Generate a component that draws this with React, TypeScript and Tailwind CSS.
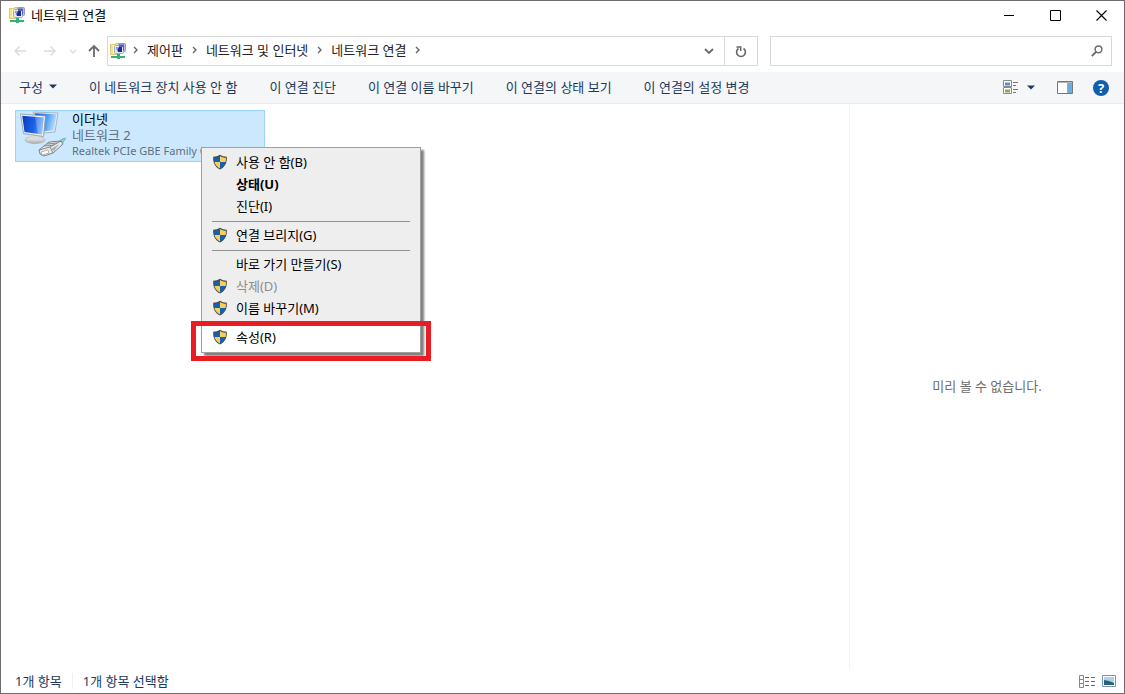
import clsx from "clsx";

const commands = [
  "이 네트워크 장치 사용 안 함",
  "이 연결 진단",
  "이 연결 이름 바꾸기",
  "이 연결의 상태 보기",
  "이 연결의 설정 변경",
];

const menuGroups = [
  [
    { label: "사용 안 함(B)", shield: true },
    { label: "상태(U)", bold: true },
    { label: "진단(I)" },
  ],
  [{ label: "연결 브리지(G)", shield: true }],
  [
    { label: "바로 가기 만들기(S)" },
    { label: "삭제(D)", shield: true, disabled: true },
    { label: "이름 바꾸기(M)", shield: true },
  ],
];

function NetworkFolderIcon() {
  return (
    <svg width="16" height="16" viewBox="0 0 16 16" className="shrink-0">
      <path d="M0.5 1.5h5v-1h4v11h-9z" fill="#f5e47c" stroke="#dccb74" />
      <path d="M3 2h2v9H3z" fill="#fff8c4" />
      <rect x="8.5" y="0.5" width="7" height="8" rx="1" fill="#b9bfdc" stroke="#8f97bd" />
      <rect x="4.500" y="2.500" width="9" height="8" rx="1" fill="#e4e7f4" stroke="#a3a9c9" />
      <path d="M9 1.500h5v6h-1V4H9z" fill="#5562b8" />
      <path d="M6 4h6v5H8z" fill="#1c2b9c" />
      <path d="M6 4h3l-2 4z" fill="#8fa4ee" />
      <path d="M7 11h3v2h5v2h-5v1H7v-1H1v-2h6z" fill="#35b078" />
    </svg>
  );
}

function ShieldIcon() {
  return (
    <svg width="16" height="16" viewBox="0 0 16 16" className="shrink-0">
      <path
        d="M8 0.7C6.2 2 3.6 2.7 1.2 2.7 0.8 8.2 2.6 12.8 8 15.4 13.4 12.8 15.2 8.2 14.8 2.7 12.4 2.7 9.8 2 8 0.7z"
        fill="#4a4a45"
      />
      <path d="M8 2C6.300 3.1 4.3 3.7 2.1 3.8 2 5.3 2.1 6.6 2.4 8H8z" fill="#1362b0" />
      <path d="M8 2C9.700 3.1 11.7 3.7 13.9 3.8 14 5.3 13.9 6.6 13.6 8H8z" fill="#f8cf5c" />
      <path d="M2.4 8H8V14.4C5.1 12.9 3.2 10.8 2.4 8z" fill="#f8cf5c" />
      <path d="M13.6 8H8V14.4C10.9 12.9 12.8 10.8 13.6 8z" fill="#1362b0" />
    </svg>
  );
}

function EthernetIcon() {
  return (
    <svg width="48" height="48" viewBox="0 0 48 48" className="shrink-0">
      <defs>
        <linearGradient id="screen" x1="0" y1="0.2" x2="1" y2="0.4">
          <stop offset="0" stopColor="#0a3cc4" />
          <stop offset="0.6" stopColor="#1e62e6" />
          <stop offset="1" stopColor="#6fb0fa" />
        </linearGradient>
        <linearGradient id="back" x1="0" y1="0" x2="1" y2="0.2">
          <stop offset="0" stopColor="#1247cf" />
          <stop offset="0.6" stopColor="#4f9bf3" />
          <stop offset="1" stopColor="#b5dcfd" />
        </linearGradient>
        <linearGradient id="base" x1="0" y1="0" x2="0" y2="1">
          <stop offset="0" stopColor="#f7f7f7" />
          <stop offset="1" stopColor="#a9aeb3" />
        </linearGradient>
      </defs>
      <path d="M13 1l25 1-3 19-12 1z" fill="#e9edf1" stroke="#9aa6b1" strokeWidth="0.8" />
      <path d="M14.500 2.300l22 1-2.500 16-10 1z" fill="url(#back)" />
      <ellipse cx="15" cy="29" rx="10" ry="3.500" fill="url(#base)" stroke="#a3a8ac" strokeWidth="0.6" />
      <path d="M11 22l8 1 1 5q-5 3-9 0z" fill="#d9dcdf" />
      <path d="M0.5 3l25 2-2 20.500-20-3z" fill="#f2f4f6" stroke="#8b959f" strokeWidth="0.8" />
      <path d="M2.2 4.800l21.600 1.700-1.800 17-17.500-2.600z" fill="url(#screen)" />
      <path d="M15 5.800l8.800 0.700-1.800 17-4-0.600z" fill="#fff" opacity="0.25" />
      <path d="M37 32l5-4 4-1-4 6z" fill="#8acdd3" stroke="#5ea6ad" strokeWidth="0.6" />
      <path d="M19 39l10-8 12-1 2 3-10 9-9 3-4-2z" fill="#e5e9ea" stroke="#70777c" strokeWidth="0.9" />
      <path d="M19 39l11-3 3 6M30 36l11-6M27 33l10-1M24 35l10-1" fill="none" stroke="#788085" strokeWidth="0.9" />
      <path d="M21 41l7-2 1 3-7 2z" fill="#fff" stroke="#868c90" strokeWidth="0.6" />
      <path d="M31 38l8-5-5 7z" fill="#a9b1b5" />
    </svg>
  );
}

function Crumb({ children }: { children?: string }) {
  return (
    <>
      {children && <button className="whitespace-nowrap">{children}</button>}
      <svg width="5" height="8" viewBox="0 0 5 8" className="shrink-0">
        <path d="M1 1l3 3-3 3" fill="none" stroke="#666" strokeWidth="1.4" />
      </svg>
    </>
  );
}

function TitleBar() {
  return (
    <header className="flex h-7 shrink-0 items-center pl-2">
      <NetworkFolderIcon />
      <h1 className="ml-1.5 text-black">네트워크 연결</h1>
      <div className="mr-px ml-auto flex h-full">
        <button aria-label="최소화" className="flex w-11 items-center justify-center">
          <svg width="10" height="10" viewBox="0 0 10 10">
            <path d="M0 5.500h10" stroke="#000" />
          </svg>
        </button>
        <button aria-label="최대화" className="flex w-12 items-center justify-center">
          <svg width="11" height="11" viewBox="0 0 11 11">
            <path d="M0.500 0.500h10v10h-10z" fill="none" stroke="#000" />
          </svg>
        </button>
        <button aria-label="닫기" className="flex w-11 items-center justify-center">
          <svg width="11" height="11" viewBox="0 0 11 11">
            <path d="M0.500 0.500l10 10M10.500 0.500l-10 10" stroke="#000" strokeWidth="1.100" />
          </svg>
        </button>
      </div>
    </header>
  );
}

function AddressBar() {
  return (
    <div className="mt-[7px] flex h-[30px] shrink-0 items-stretch pr-3">
      <nav className="flex w-[106px] shrink-0 items-center pl-3">
        <button aria-label="뒤로" className="mr-4">
          <svg width="14" height="12" viewBox="0 0 14 12">
            <path d="M13 6H2M6.500 1.500L2 6l4.500 4.500" fill="none" stroke="#dcdcdc" strokeWidth="1.500" />
          </svg>
        </button>
        <button aria-label="앞으로" className="mr-3">
          <svg width="14" height="12" viewBox="0 0 14 12">
            <path d="M1 6h11M7.500 1.500L12 6l-4.500 4.500" fill="none" stroke="#dcdcdc" strokeWidth="1.500" />
          </svg>
        </button>
        <button aria-label="최근 위치" className="mr-[11px]">
          <svg width="8" height="5" viewBox="0 0 8 5">
            <path d="M1 1l3 3 3-3" fill="none" stroke="#dcdcdc" strokeWidth="1.300" />
          </svg>
        </button>
        <button aria-label="위로">
          <svg width="12" height="14" viewBox="0 0 12 14">
            <path d="M6 13V2M1 7l5-5 5 5" fill="none" stroke="#6b6b6b" strokeWidth="1.800" />
          </svg>
        </button>
      </nav>
      <div className="flex min-w-0 grow items-center border border-[#d9d9d9]">
        <div className="flex min-w-0 grow items-center gap-[7px] pl-0.5">
          <NetworkFolderIcon />
          <div className="flex items-center gap-[9px] pb-0.5">
            <Crumb />
            <Crumb>제어판</Crumb>
            <Crumb>네트워크 및 인터넷</Crumb>
            <Crumb>네트워크 연결</Crumb>
          </div>
        </div>
        <button aria-label="이전 위치" className="flex w-[30px] justify-center">
          <svg width="10" height="7" viewBox="0 0 10 7">
            <path d="M1 1l4 4 4-4" fill="none" stroke="#6b6b6b" strokeWidth="1.800" />
          </svg>
        </button>
        <button
          aria-label="새로 고침"
          className="flex h-full w-[33px] items-center justify-center border-l border-[#d9d9d9]"
        >
          <svg width="12" height="13" viewBox="0 0 12 13">
            <path d="M3.500 3.500A4.400 4.400 0 1 0 8.500 3.500" fill="none" stroke="#666" strokeWidth="1.600" />
            <path d="M1.500 2h4.200v4" fill="none" stroke="#666" strokeWidth="1.500" />
          </svg>
        </button>
      </div>
      <div className="ml-3 flex w-[342px] shrink-0 items-center border border-[#d9d9d9]">
        <input aria-label="검색" className="h-full min-w-0 grow px-2 outline-none" />
        <button aria-label="검색 시작" className="mr-2">
          <svg width="12" height="12" viewBox="0 0 12 12">
            <circle cx="7.500" cy="4.300" r="3.400" fill="none" stroke="#6b6b6b" strokeWidth="1.500" />
            <path d="M5 7L0.800 11.200" stroke="#6b6b6b" strokeWidth="1.800" />
          </svg>
        </button>
      </div>
    </div>
  );
}

function Toolbar() {
  return (
    <div className="mt-1.5 flex h-8 shrink-0 items-center border-b border-[#ebebeb] bg-[#f4f6f8] pl-[18px] text-[#1e395b]">
      <div className="flex gap-8 pb-0.5 whitespace-nowrap">
        <button className="flex items-center gap-1.5">
          구성
          <svg width="8" height="5" viewBox="0 0 8 5">
            <path d="M0 0.500h8L4 4.500z" fill="#1e395b" />
          </svg>
        </button>
        {commands.map((command) => (
          <button key={command}>{command}</button>
        ))}
      </div>
      <div className="ml-auto flex items-center pr-[15px]">
        <button aria-label="보기 변경" className="flex items-center gap-2">
          <svg width="16" height="15" viewBox="0 0 16 15">
            <path d="M0.500 0.500h8v6h-8zM0.500 7.500h8v6h-8z" fill="#fff" stroke="#8a8a8a" />
            <path d="M2 2.500h5v3H2z" fill="#5d8fc7" />
            <path d="M2 9.500h5v3H2z" fill="#93a35b" />
            <path d="M10 2.500h5M10 5.500h3M10 9.500h5M10 12.500h3" stroke="#777" />
          </svg>
          <svg width="8" height="5" viewBox="0 0 8 5">
            <path d="M0 0.500h8L4 4.500z" fill="#1e395b" />
          </svg>
        </button>
        <button aria-label="미리 보기 창" className="ml-[22px]">
          <svg width="16" height="13" viewBox="0 0 16 13">
            <path d="M0.500 0.500h15v12h-15z" fill="#fff" stroke="#777" />
            <path d="M1 1.500h14" stroke="#b5b5b5" />
            <path d="M11 2h4v10h-4z" fill="#69afe2" />
            <path d="M10.500 2v10" stroke="#aaa" />
          </svg>
        </button>
        <button
          aria-label="도움말"
          className="ml-5 flex size-4 items-center justify-center rounded-full bg-[#0f5fae] text-[13px] font-bold text-white"
        >
          ?
        </button>
      </div>
    </div>
  );
}

type Item = { label: string; shield?: boolean; bold?: boolean; disabled?: boolean };

function MenuItem({ label, shield, bold, disabled }: Item) {
  return (
    <button
      role="menuitem"
      disabled={disabled}
      className={clsx(
        "flex h-[22px] w-full items-center gap-2 pl-2.5 text-left",
        bold && "font-bold",
        disabled ? "text-[#8d8d8d]" : "text-black"
      )}
    >
      <span className="flex w-4">{shield && <ShieldIcon />}</span>
      {label}
    </button>
  );
}

function ContextMenu() {
  return (
    <div className="absolute top-[43px] left-[200px] w-[220px]">
      <div
        role="menu"
        className="border border-[#a0a0a0] bg-[#eeeeee] pt-[3px] shadow-[3px_3px_2px_rgba(0,0,0,0.5)]"
      >
        {menuGroups.map((group, index) => (
          <div key={index}>
            {group.map((item) => (
              <MenuItem key={item.label} {...item} />
            ))}
            <hr className="mx-2.5 mt-1 mb-0.5 border-[#919191]" />
          </div>
        ))}
        <div className="bg-white pb-1">
          <MenuItem label="속성(R)" shield />
        </div>
      </div>
      <div className="pointer-events-none absolute -right-2.5 -bottom-2 -left-2.5 h-10 border-5 border-[#ec1c24]" />
    </div>
  );
}

function StatusBar() {
  return (
    <footer className="flex h-6 shrink-0 items-center pr-2 pl-3.5 text-[#1e395b]">
      <span>1개 항목</span>
      <span className="ml-2.5 border-l border-[#f0f0f0] pl-2.5">1개 항목 선택함</span>
      <button aria-label="자세히" className="ml-auto">
        <svg width="17" height="13" viewBox="0 0 17 13">
          <path d="M0.500 0.500h4v12h-4zM0.500 4.500h4M0.500 8.500h4" fill="none" stroke="#888" />
          <path d="M6 2.500h4M12 2.500h4M6 6.500h4M12 6.500h4M6 10.500h4M12 10.500h4" stroke="#666" />
        </svg>
      </button>
      <button aria-label="큰 아이콘" className="ml-1.5">
        <svg width="14" height="12" viewBox="0 0 14 12">
          <path d="M0.500 0.500h13v11h-13z" fill="#fff" stroke="#7694ad" />
          <path d="M2 2h10v8H2z" fill="#a9d3ef" />
          <path d="M2 5l5 1 5 2v2H2z" fill="#2f6079" />
        </svg>
      </button>
    </footer>
  );
}

function App() {
  return (
    <div className="flex h-screen flex-col overflow-hidden border border-[#6d6b6d] bg-white font-['Noto_Sans','Noto_Sans_CJK_KR',sans-serif] text-[13px] leading-4 text-[#222]">
      <TitleBar />
      <AddressBar />
      <Toolbar />
      <main className="relative flex min-h-0 grow">
        <section className="grow pt-1.5 pl-3.5">
          <button className="flex h-[52px] w-[250px] border border-[#99d1ff] bg-[#cce8ff] pl-1 text-left text-[#5f6f7c]">
            <EthernetIcon />
            <span className="ml-1">
              <span className="block text-black">이더넷</span>
              <span className="block">네트워크 2</span>
              <span className="block text-[11px] whitespace-nowrap">
                Realtek PCIe GBE Family Controller
              </span>
            </span>
          </button>
        </section>
        <aside className="flex w-[275px] shrink-0 justify-center border-l border-[#f3f3f3] pt-[274px] text-[#6d6d6d]">
          미리 볼 수 없습니다.
        </aside>
        <ContextMenu />
      </main>
      <StatusBar />
    </div>
  );
}

export default App;
